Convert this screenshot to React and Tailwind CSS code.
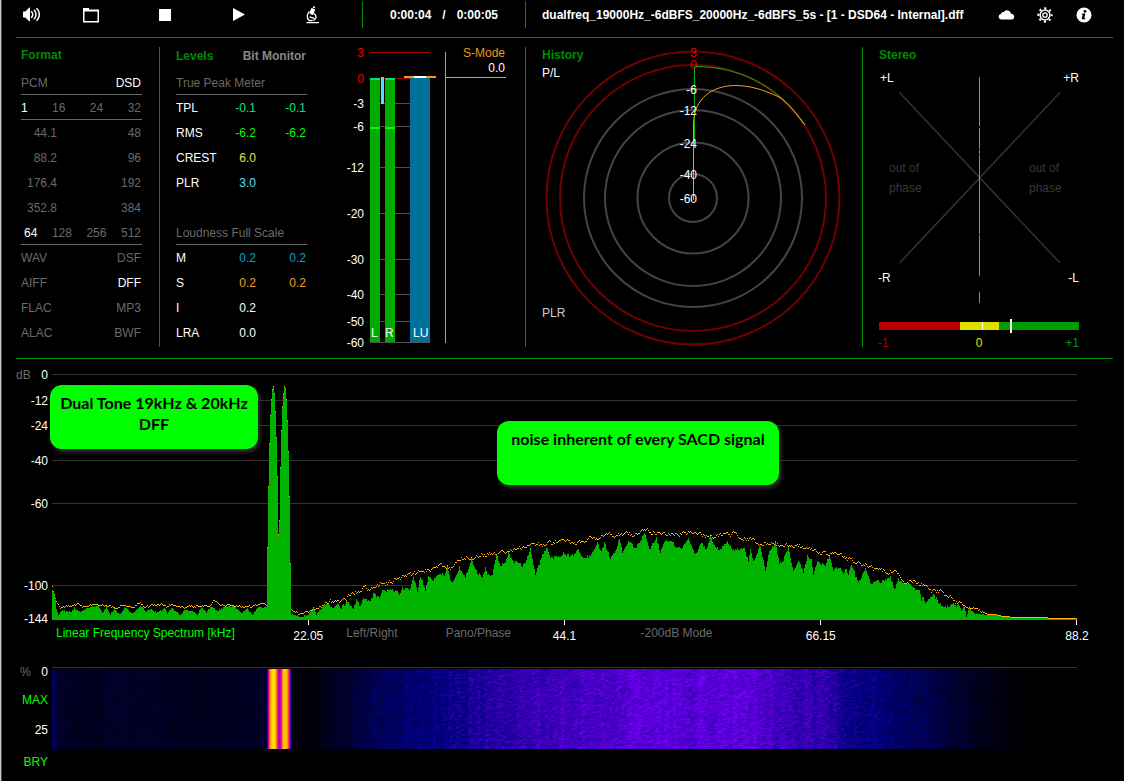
import React, { useEffect, useRef } from "react";
import { ImVolumeHigh } from "react-icons/im";

// Small seeded generator so the noise looks the same on every load
const createRandom = (seed) => {
  let s = seed;
  return () => {
    s = (s * 1664525 + 1013904223) % 4294967296;
    return s / 4294967296;
  };
};

// Linear interpolation in a list of [x, y] points
const valueAt = (points, x) => {
  if (x <= points[0][0]) return points[0][1];
  for (let i = 1; i < points.length; i++) {
    const [x1, y1] = points[i];
    if (x <= x1) {
      const [x0, y0] = points[i - 1];
      return y0 + ((y1 - y0) * (x - x0)) / (x1 - x0);
    }
  }
  return points[points.length - 1][1];
};

// Peak hold line of the spectrum
const HOLD = [
  [52, 587], [54, 595], [56, 602], [60, 607], [72, 606], [77, 603], [82, 607], [92, 604], [110, 606],
  [134, 606], [140, 602], [144, 607], [162, 604], [166, 607], [172, 603], [180, 607], [210, 605],
  [213, 601], [222, 605], [250, 606], [262, 603], [266, 606],
];
const HOLD_NOISE = [
  [292, 611], [298, 613], [306, 611], [312, 609], [324, 604], [340, 600], [350, 595], [362, 588],
  [375, 588], [382, 583], [400, 579], [415, 573], [425, 569], [440, 566], [450, 567], [460, 560],
  [475, 555], [500, 553], [520, 548], [540, 545], [552, 543], [562, 538], [572, 543], [590, 539],
  [610, 535], [630, 534], [645, 531], [660, 533], [690, 533], [710, 536], [735, 533], [750, 539],
  [760, 543], [790, 545], [805, 547], [820, 553], [835, 554], [850, 559], [860, 565], [866, 563],
  [878, 571], [894, 571], [905, 581], [918, 582], [930, 591], [940, 591], [950, 598], [960, 604],
  [975, 609], [990, 614], [1005, 617], [1020, 618], [1030, 619], [1076, 619],
];
// The two tones
const TONES = [
  [267, 548], [268, 487], [269, 444], [270, 416], [271, 400], [272, 390], [273, 387], [274, 394],
  [275, 412], [276, 438], [277, 477], [278, 535], [279, 521], [280, 468], [281, 431], [282, 407],
  [283, 394], [284, 387], [285, 389], [286, 400], [287, 421], [288, 452], [289, 497], [290, 564],
];
const LEVEL = [
  [52, 589], [54, 594], [56, 608], [58, 615], [61, 610], [71, 612], [74, 608], [80, 612], [86, 608],
  [98, 606], [102, 613], [106, 607], [110, 614], [114, 609], [120, 615], [124, 607], [132, 614],
  [140, 606], [146, 611], [151, 609], [156, 613], [164, 608], [167, 613], [171, 608], [180, 615],
  [184, 610], [192, 611], [197, 615], [201, 607], [206, 612], [211, 606], [217, 611], [226, 606],
  [235, 607], [241, 613], [247, 609], [252, 615], [258, 607], [266, 608],
];
const LEVEL_NOISE = [
  [291, 614], [300, 617], [308, 615], [313, 608], [316, 615], [320, 609], [328, 604], [332, 608],
  [337, 603], [340, 609], [347, 601], [353, 609], [356, 600], [360, 607], [363, 597], [370, 602],
  [373, 594], [379, 597], [382, 591], [390, 590], [396, 591], [399, 595], [402, 588], [409, 590],
  [413, 577], [417, 591], [420, 576], [425, 590], [428, 577], [433, 580], [440, 573], [444, 576],
  [447, 567], [451, 583], [454, 580], [459, 567], [465, 577], [471, 559], [477, 573], [482, 577],
  [485, 568], [487, 576], [492, 575], [496, 556], [500, 565], [505, 562], [508, 553], [513, 562],
  [519, 562], [522, 567], [525, 562], [530, 549], [535, 575], [542, 555], [547, 547], [550, 558],
  [560, 556], [564, 553], [570, 557], [578, 550], [583, 558], [590, 556], [597, 543], [601, 552],
  [604, 543], [610, 558], [616, 550], [619, 539], [622, 553], [628, 541], [635, 548], [640, 541],
  [644, 533], [649, 550], [656, 538], [660, 552], [664, 541], [672, 541], [676, 548], [682, 547],
  [688, 538], [695, 555], [701, 543], [706, 550], [710, 537], [715, 548], [720, 549], [727, 541],
  [732, 550], [738, 549], [744, 548], [748, 562], [750, 550], [753, 562], [760, 546], [765, 571],
  [769, 552], [775, 543], [779, 563], [782, 562], [788, 548], [793, 572], [798, 561], [803, 572],
  [807, 556], [811, 560], [813, 574], [817, 561], [825, 566], [829, 555], [833, 570], [840, 567],
  [843, 575], [845, 568], [848, 574], [851, 564], [857, 581], [861, 578], [865, 568], [871, 585],
  [875, 581], [880, 582], [890, 577], [894, 589], [898, 579], [904, 585], [909, 583], [915, 589],
  [919, 590], [921, 600], [922, 597], [926, 603], [933, 594], [938, 602], [944, 608], [953, 604],
  [956, 608], [958, 604], [961, 610], [964, 606], [966, 616], [969, 608], [975, 614], [985, 615],
  [995, 615], [1002, 617], [1020, 618], [1076, 619],
];

const buildSpectrum = () => {
  const random = createRandom(7);
  let fill = "M52 620";
  let hold = "";
  let drift = 0;
  for (let x = 52; x < 1077; x++) {
    const inTones = x >= 267 && x <= 290;
    let level;
    let peak;
    if (inTones) {
      level = valueAt(TONES, x);
      peak = level;
    } else {
      const noisy = x > 290;
      const fade = x > 960 ? Math.max(0, (1020 - x) / 90) : 1;
      const spread = (noisy && x > 320 ? 2 : 1) * fade;
      drift = drift * 0.6 + (random() - 0.5) * 2;
      level = valueAt(noisy ? LEVEL_NOISE : LEVEL, x) + (random() - 0.5) * 1.5 * spread;
      peak = valueAt(noisy ? HOLD_NOISE : HOLD, x) + drift * spread;
    }
    fill += `V${Math.round(level)}h1`;
    hold += `M${x} ${Math.round(Math.min(peak, level - 1)) + 0.5}h1`;
  }
  return { fill: `${fill}V620z`, hold };
};

const spectrum = buildSpectrum();

const HeaderButton = ({ label, children }) => {
  return (
    <button type="button" aria-label={label} className="flex h-[18px] w-[18px] items-center justify-center text-white">
      {children}
    </button>
  );
};

const FolderIcon = () => (
  <svg viewBox="0 0 18 18" className="h-[18px] w-[18px]">
    <path d="M1 2h6v1.500h10v13H1z" fill="#fff" />
    <path d="M2.500 5.500h13V15h-13z" fill="#000" />
  </svg>
);

const MicroscopeIcon = () => (
  <svg viewBox="0 0 18 18" className="h-[18px] w-[18px]" fill="none" stroke="#fff">
    <path d="M7.600 2.500l3 1.100-1.700 4.900-3-1.100z" fill="#fff" />
    <path d="M9 .8l2 .8" strokeWidth="1.500" />
    <path d="M5.500 5.500C2.700 8 2.500 12 5 14.200M5.500 10.800l5 1.600M10 7.500c1.800 1.500 2.600 3.500 1.300 5.500-.6.900-1.500 1.300-2.500 1.300" strokeWidth="1.300" />
    <path d="M2.500 16.700h12.500M4.500 14.500h4" strokeWidth="1.300" />
  </svg>
);

const CloudIcon = () => (
  <svg viewBox="0 0 18 18" className="h-[18px] w-[18px]">
    <path d="M4 13.500a2.800 2.800 0 0 1-.2-5.500 2.700 2.700 0 0 1 2.900-1.900A4 4 0 0 1 14 7.700a2.900 2.900 0 0 1 .6 5.800z" fill="#fff" />
  </svg>
);

const GearIcon = () => (
  <svg viewBox="0 0 18 18" className="h-[18px] w-[18px]" fill="none" stroke="#fff">
    <circle cx="9" cy="9" r="4.900" strokeWidth="1.500" />
    <circle cx="9" cy="9" r="2.200" strokeWidth="1.300" />
    <circle cx="9" cy="9" r="6.700" strokeWidth="2" strokeDasharray="2.100 3.162" strokeDashoffset="1" />
  </svg>
);

const InfoIcon = () => (
  <svg viewBox="0 0 18 18" className="h-[18px] w-[18px]">
    <circle cx="9" cy="9" r="7.500" fill="#fff" />
    <circle cx="10" cy="5.300" r="1.400" fill="#000" />
    <path d="M7 7.500h3.400l-1.100 4.700h1.200l-.3 1.100H6.700l1-4.700H6.700z" fill="#000" />
  </svg>
);

const Header = () => {
  return (
    <header className="grid grid-cols-[346fr_163fr_588fr] border-b border-[#008c00] pt-px pb-[9px]">
      <div className="flex h-[27px] items-center gap-14 pl-1.5">
        <div className="flex gap-[42px]">
          <HeaderButton label="Volume"><ImVolumeHigh size={17} /></HeaderButton>
          <HeaderButton label="Open"><FolderIcon /></HeaderButton>
        </div>
        <HeaderButton label="Stop"><span className="h-3 w-3 bg-white" /></HeaderButton>
        <HeaderButton label="Play">
          <svg viewBox="0 0 12 13" className="h-[13px] w-3"><path d="M0 0l12 6.500L0 13z" fill="#fff" /></svg>
        </HeaderButton>
        <HeaderButton label="Analyse"><MicroscopeIcon /></HeaderButton>
      </div>
      <div className="flex h-[27px] items-center justify-center gap-[11px] border-l border-[#008c00] font-bold text-white">
        <span>0:00:04</span>
        <span>/</span>
        <span>0:00:05</span>
      </div>
      <div className="flex h-[27px] items-center justify-between border-l border-[#008c00] pr-5 pl-4">
        <h1 className="font-bold whitespace-nowrap text-white">
          dualfreq_19000Hz_-6dBFS_20000Hz_-6dBFS_5s - [1 - DSD64 - Internal].dff
        </h1>
        <div className="flex gap-[21px]">
          <HeaderButton label="Cloud"><CloudIcon /></HeaderButton>
          <HeaderButton label="Settings"><GearIcon /></HeaderButton>
          <HeaderButton label="Information"><InfoIcon /></HeaderButton>
        </div>
      </div>
    </header>
  );
};

const FormatRow = ({ items, active, line, className = "" }) => {
  return (
    <li className={`flex h-[25px] items-center justify-between pr-px ${line ? "border-b border-[#666] pt-0.5" : ""} ${className}`}>
      {items.map((item) => (
        <span key={item} className={item === active ? "text-white" : ""}>{item}</span>
      ))}
    </li>
  );
};

const RateRow = ({ items }) => {
  return (
    <li className="flex h-[25px] items-center justify-between pr-px">
      <span className="w-9 text-right">{items[0]}</span>
      <span>{items[1]}</span>
    </li>
  );
};

const FormatPanel = () => {
  return (
    <section className="pr-[17px] pl-[5px]">
      <h2 className="h-[23px] font-bold text-[#008c00]">Format</h2>
      <ul className="text-[#6a6a6a]">
        <FormatRow items={["PCM", "DSD"]} active="DSD" line />
        <FormatRow items={["1", "16", "24", "32"]} active="1" line />
        <RateRow items={["44.1", "48"]} />
        <RateRow items={["88.2", "96"]} />
        <RateRow items={["176.4", "192"]} />
        <RateRow items={["352.8", "384"]} />
        <FormatRow items={["64", "128", "256", "512"]} active="64" line className="pl-[3px]" />
        <FormatRow items={["WAV", "DSF"]} />
        <FormatRow items={["AIFF", "DFF"]} active="DFF" />
        <FormatRow items={["FLAC", "MP3"]} />
        <FormatRow items={["ALAC", "BWF"]} />
      </ul>
    </section>
  );
};

const LevelTable = ({ title, rows }) => {
  return (
    <table className="w-full table-fixed border-separate border-spacing-0">
      <colgroup>
        <col className="w-[41px]" />
        <col className="w-10" />
        <col className="w-[50px]" />
      </colgroup>
      <thead>
        <tr>
          <th colSpan={3} className="h-[25px] border-b border-[#666] pt-0.5 text-left font-normal text-[#6a6a6a]">{title}</th>
        </tr>
      </thead>
      <tbody>
        {rows.map(({ name, left, right, color }) => (
          <tr key={name} className="h-[25px]">
            <th className="text-left font-normal text-white">{name}</th>
            <td className={`pr-px text-right ${color}`}>{left}</td>
            <td className={`pr-px text-right ${color}`}>{right}</td>
          </tr>
        ))}
      </tbody>
    </table>
  );
};

const peakRows = [
  { name: "TPL", left: "-0.1", right: "-0.1", color: "text-[#00e87c]" },
  { name: "RMS", left: "-6.2", right: "-6.2", color: "text-[#00ff00]" },
  { name: "CREST", left: "6.0", color: "text-[#e0e050]" },
  { name: "PLR", left: "3.0", color: "text-[#50e0ff]" },
];

const loudnessRows = [
  { name: "M", left: "0.2", right: "0.2", color: "text-[#00a0d0]" },
  { name: "S", left: "0.2", right: "0.2", color: "text-[#f0a020]" },
  { name: "I", left: "0.2", color: "text-white" },
  { name: "LRA", left: "0.0", color: "text-white" },
];

const meterScale = [
  { label: "3", y: 52 },
  { label: "0", y: 78 },
  { label: "-3", y: 103 },
  { label: "-6", y: 126 },
  { label: "-12", y: 167 },
  { label: "-20", y: 213 },
  { label: "-30", y: 259 },
  { label: "-40", y: 294 },
  { label: "-50", y: 321 },
  { label: "-60", y: 342 },
];

// Level meter with its dB scale
const Meter = () => {
  return (
    <svg viewBox="340 47 98 302" className="h-[302px] w-[98px]" shapeRendering="crispEdges">
      {meterScale.map(({ label, y }, index) => (
        <g key={label}>
          <rect x="370" y={y} width="60" height="1" fill={index < 2 ? "#a00000" : "#505050"} />
          <text x="364" y={y + 5} textAnchor="end" fill={index < 2 ? "#f00000" : "#fff"}>{label}</text>
        </g>
      ))}
      <rect x="370" y="78" width="10" height="264" fill="#00ab00" />
      <rect x="385" y="78" width="10" height="264" fill="#00ab00" />
      <rect x="370" y="78" width="10" height="2" fill="#00e070" />
      <rect x="385" y="78" width="10" height="2" fill="#00e070" />
      <rect x="370" y="127" width="10" height="2" fill="#00ff00" />
      <rect x="385" y="127" width="10" height="2" fill="#00ff00" />
      <rect x="381" y="77" width="3" height="27" fill="#50e0ff" />
      <rect x="410" y="78" width="20" height="264" fill="#007098" />
      <rect x="404" y="76" width="32" height="2" fill="#e89a20" />
      <rect x="414" y="76" width="12" height="2" fill="#fff" />
      <text x="371" y="337" fill="#fff">L</text>
      <text x="385" y="337" fill="#fff">R</text>
      <text x="413" y="337" fill="#fff">LU</text>
    </svg>
  );
};

const LevelsPanel = () => {
  return (
    <section className="flex border-l border-[#008c00] pl-4">
      <div className="w-[131px]">
        <div className="flex h-[23px] justify-between pr-px font-bold">
          <button type="button" className="flex pt-px text-[#008c00]">Levels</button>
          <button type="button" className="flex pt-px text-[#888]">Bit Monitor</button>
        </div>
        <LevelTable title="True Peak Meter" rows={peakRows} />
        <div className="h-[25px]" />
        <LevelTable title="Loudness Full Scale" rows={loudnessRows} />
      </div>
      <div className="ml-[33px]">
        <Meter />
      </div>
      <div className="mt-[5px] ml-[7px] h-[291px] w-[61px] border-l border-[#e89a20]">
        <div className="-mt-1.5 flex h-8 flex-col items-end border-b border-[#e89a20] pr-px leading-[15px]">
          <button type="button" className="text-[#e89a20]">S-Mode</button>
          <span className="text-white">0.0</span>
          <span className="mt-px mr-1 h-px w-[11px] bg-white" />
        </div>
      </div>
    </section>
  );
};

const rings = [
  { label: "3", r: 146.5, y: 53 },
  { label: "0", r: 133, y: 65 },
  { label: "-6", r: 109, y: 90 },
  { label: "-12", r: 88, y: 111 },
  { label: "-24", r: 55.5, y: 144 },
  { label: "-40", r: 24, y: 175 },
];

const HistoryPanel = () => {
  return (
    <section className="grid border-l border-[#008c00]">
      <div className="flex h-[274px] flex-col pl-4 [grid-area:1/1]">
        <h2 className="h-[18px] font-bold text-[#008c00]">History</h2>
        <span className="text-white">P/L</span>
        <span className="mt-auto text-[#ccc]">PLR</span>
      </div>
      <svg viewBox="526 47 336 300" className="h-[300px] w-full [grid-area:1/1]" fill="none">
        {rings.map(({ label, r }, index) => (
          <circle key={label} cx="693" cy="198" r={r} stroke={index < 2 ? "#720000" : "#444"} strokeWidth="2" />
        ))}
        <path d="M694.500 140V66.500C735 66.500 776 82 805 125" stroke="#00b400" />
        <path d="M693.500 200V124C694 98 712 86 735 85.500C752 85.500 766 91 779 97C790 104 797 115 805 125" stroke="#f0a020" />
        {rings.map(({ label, y }, index) => (
          <text key={label} x="697" y={y + 4} textAnchor="end" fill={index < 2 ? "#f00000" : "#fff"}>{label}</text>
        ))}
        <text x="697" y="203" textAnchor="end" fill="#fff">-60</text>
      </svg>
    </section>
  );
};

// Goniometer and correlation bar
const StereoPanel = () => {
  return (
    <section className="grid border-l border-[#008c00]">
      <h2 className="pl-4 font-bold text-[#008c00] [grid-area:1/1]">Stereo</h2>
      <svg viewBox="863 47 250 302" className="h-[302px] w-full [grid-area:1/1]">
        <path d="M899.500 92.500L1060 263M1060 92.500L899.500 263" stroke="#333" strokeWidth="1.500" />
        <path d="M979.500 77v49M979.500 128v21M979.500 150v4M979.500 155v35M979.500 190v44M979.500 235v41M979.500 292v11" stroke="#0e0" />
        <text x="880" y="82" fill="#fff">+L</text>
        <text x="1079" y="82" textAnchor="end" fill="#fff">+R</text>
        <text x="878" y="282" fill="#fff">-R</text>
        <text x="1079" y="282" textAnchor="end" fill="#fff">-L</text>
        <g fill="#383838">
          <text x="889" y="172">out of</text>
          <text x="889" y="192">phase</text>
          <text x="1029" y="172">out of</text>
          <text x="1029" y="192">phase</text>
        </g>
        <rect x="879" y="322" width="81" height="8" fill="#b80000" />
        <rect x="960" y="322" width="39" height="8" fill="#e0e000" />
        <rect x="999" y="322" width="80" height="8" fill="#009c00" />
        <rect x="982" y="322" width="1" height="8" fill="#fff" />
        <rect x="1010" y="319" width="2" height="14" fill="#fff" />
        <text x="878" y="347" fill="#b80000">-1</text>
        <text x="979" y="347" textAnchor="middle" fill="#e0e000">0</text>
        <text x="1079" y="347" textAnchor="end" fill="#009c00">+1</text>
      </svg>
    </section>
  );
};

const dbScale = [
  { label: "0", y: 374 },
  { label: "-12", y: 400 },
  { label: "-24", y: 425 },
  { label: "-40", y: 460 },
  { label: "-60", y: 503 },
  { label: "-100", y: 585 },
  { label: "-144", y: 618 },
];

const Note = ({ className, children }) => {
  return (
    <p className={`absolute h-16 rounded-xl bg-[#00ff00] pt-[7px] text-center font-[Lato,sans-serif] text-base leading-[21px] font-bold whitespace-nowrap text-black shadow-[2px_3px_4px_#333] ${className}`}>
      {children}
    </p>
  );
};

const TickLabel = ({ children }) => {
  return <span className="-mr-6 ml-auto w-12 pt-[3px] text-center text-white">{children}</span>;
};

const SpectrumPanel = () => {
  return (
    <section className="relative">
      <svg viewBox="16 359 1097 266" className="w-full" shapeRendering="crispEdges">
        <text x="16" y="379" fill="#6a6a6a">dB</text>
        {dbScale.map(({ label, y }) => (
          <g key={label}>
            <rect x="52" y={y} width="1025" height="1" fill="#333" />
            <text x="48" y={y + 5} textAnchor="end" fill="#fff">{label}</text>
          </g>
        ))}
        <path d={spectrum.fill} fill="#00b400" />
        <path d={spectrum.hold} stroke="#ffb000" fill="none" />
        <path d="M308.500 620v5M564.500 620v5M820.500 620v5M1076.500 620v5" stroke="#fff" />
      </svg>
      <div className="mr-9 ml-9 grid h-[42px] grid-cols-4 items-start text-[#6a6a6a]">
        <div className="flex items-start">
          <button type="button" className="pl-1 text-[#00ff00]">Linear Frequency Spectrum [kHz]</button>
          <TickLabel>22.05</TickLabel>
        </div>
        <div className="flex items-start">
          <button type="button" className="pl-[38px]">Left/Right</button>
          <button type="button" className="pl-12">Pano/Phase</button>
          <TickLabel>44.1</TickLabel>
        </div>
        <div className="flex items-start">
          <button type="button" className="pl-[76px]">-200dB Mode</button>
          <TickLabel>66.15</TickLabel>
        </div>
        <div className="flex items-start">
          <TickLabel>88.2</TickLabel>
        </div>
      </div>
      <Note className="top-[26px] left-[34px] w-[208px]">
        Dual Tone 19kHz &amp; 20kHz
        <br />
        DFF
      </Note>
      <Note className="top-[62px] left-[481px] w-[282px]">noise inherent of every SACD signal</Note>
    </section>
  );
};

const HEAT = [
  [0, [0, 0, 0]],
  [0.4, [0, 0, 128]],
  [0.7, [90, 0, 215]],
  [0.8, [120, 0, 255]],
  [0.88, [255, 0, 128]],
  [0.94, [255, 150, 0]],
  [1, [255, 225, 0]],
];

const HEAT_LEVEL = [
  [0, 0.34], [5, 0.14], [30, 0.09], [75, 0.13], [150, 0.09], [213, 0.12], [214, 0.3], [216, 0.88],
  [218, 0.96], [220, 1], [222, 1], [225, 0.88], [227, 0.8], [229, 0.9], [231, 0.99], [234, 0.97],
  [237, 0.85], [239, 0.1], [244, 0.02], [265, 0.05], [300, 0.17], [330, 0.3], [370, 0.36],
  [410, 0.46], [450, 0.55], [500, 0.61], [560, 0.66], [600, 0.7], [690, 0.7], [720, 0.64],
  [770, 0.55], [805, 0.42], [850, 0.32], [890, 0.18], [930, 0.08], [970, 0.01], [1024, 0],
];

const heatColor = (level) => {
  for (let i = 1; i < HEAT.length; i++) {
    if (level <= HEAT[i][0]) {
      const [l0, c0] = HEAT[i - 1];
      const [l1, c1] = HEAT[i];
      const t = (level - l0) / (l1 - l0);
      return c0.map((c, n) => c + (c1[n] - c) * t);
    }
  }
  return HEAT[HEAT.length - 1][1];
};

const Spectrogram = () => {
  const canvasRef = useRef(null);

  useEffect(() => {
    const canvas = canvasRef.current;
    const ctx = canvas.getContext("2d");
    const { width, height } = canvas;
    const image = ctx.createImageData(width, height);
    const random = createRandom(21);
    const columns = Array.from({ length: width }, () => random() - 0.5);
    const noise = Array.from({ length: width * height }, () => random() - 0.5);
    for (let y = 0; y < height; y++) {
      for (let x = 0; x < width; x++) {
        const i = y * width + x;
        const base = valueAt(HEAT_LEVEL, x);
        const tone = x >= 214 && x <= 238;
        // neighbours are mixed in so that the grain is a bit wider than one pixel
        const grain = (noise[i] + (noise[i + 1] || 0) + (noise[i + 2] || 0) + (noise[i + width] || 0)) / 2;
        const amount = tone ? 0 : Math.min(0.16, base * 0.6);
        const stripe = tone ? 0 : columns[x >> 2] * amount * 0.4;
        const level = tone ? base : Math.max(0, Math.min(0.8, base + grain * amount + stripe));
        const [r, g, b] = heatColor(level);
        image.data[i * 4] = r;
        image.data[i * 4 + 1] = g;
        image.data[i * 4 + 2] = b;
        image.data[i * 4 + 3] = 255;
      }
    }
    ctx.putImageData(image, 0, 0);
  }, []);

  return (
    <section className="flex">
      <div className="flex w-9 flex-col pr-1 text-right text-white">
        <div className="mt-[-3px] flex h-7 justify-between pl-1">
          <span className="text-[#6a6a6a]">%</span>
          <span>0</span>
        </div>
        <button type="button" className="h-4 self-end text-[#00ff00]">MAX</button>
        <span className="mt-3.5 h-8">25</span>
        <button type="button" className="self-end text-[#00ff00]">BRY</button>
      </div>
      <div className="mr-9 flex-1 self-start border-t border-[#333] pt-px">
        <canvas ref={canvasRef} width={1024} height={80} className="h-20 w-full" aria-label="Spectrogram" />
      </div>
    </section>
  );
};

export default function App() {
  return (
    <div className="min-h-screen border-l border-[#c8c8c8] bg-black font-['Liberation_Sans',Arial,sans-serif] text-xs">
      <div className="min-h-screen border-l border-[#8a3030] pr-[11px] pl-3.5">
        <Header />
        <main>
          <div className="grid grid-cols-[143fr_366fr_337fr_251fr] border-b border-[#008c00] pt-[9px] pb-[11px] [&>*]:h-[300px]">
            <FormatPanel />
            <LevelsPanel />
            <HistoryPanel />
            <StereoPanel />
          </div>
          <SpectrumPanel />
          <Spectrogram />
        </main>
      </div>
    </div>
  );
}
